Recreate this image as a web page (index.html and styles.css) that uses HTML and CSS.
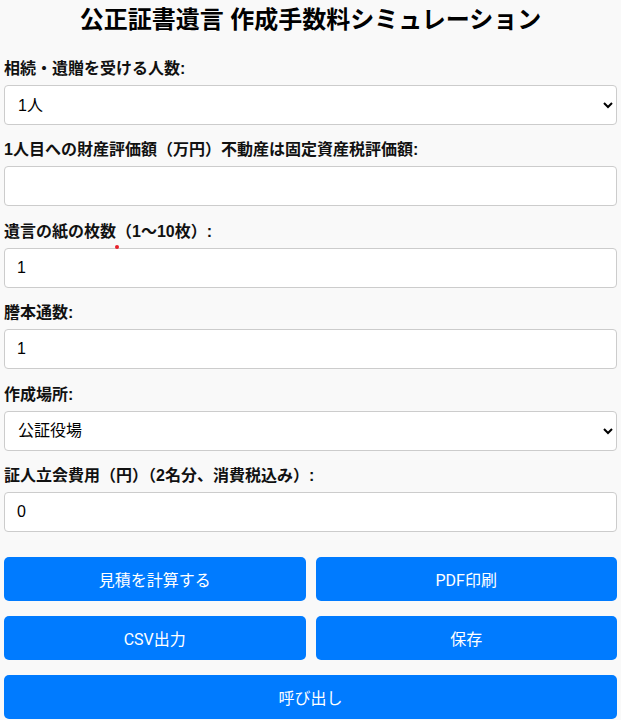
FILE: index.html
```html
<!DOCTYPE html>
<html lang="ja">
<head>
<meta charset="utf-8">
<title>公正証書遺言 作成手数料シミュレーション</title>
<link rel="stylesheet" href="styles.css">
</head>
<body>
<div class="page">
  <h1 class="title">公正証書遺言 作成手数料シミュレーション</h1>

  <div class="field">
    <label class="label" for="heirs">相続・遺贈を受ける人数:</label>
    <select id="heirs" class="control">
      <option>1人</option>
    </select>
  </div>

  <div class="field">
    <label class="label" for="value1">1人目への財産評価額（万円）不動産は固定資産税評価額:</label>
    <input id="value1" class="control" type="text" value="">
  </div>

  <div class="field">
    <label class="label marked" for="pages">遺言の紙の枚数（1〜10枚）:<span class="dot"></span></label>
    <input id="pages" class="control" type="text" value="1">
  </div>

  <div class="field">
    <label class="label" for="copies">謄本通数:</label>
    <input id="copies" class="control" type="text" value="1">
  </div>

  <div class="field">
    <label class="label" for="place">作成場所:</label>
    <select id="place" class="control">
      <option>公証役場</option>
    </select>
  </div>

  <div class="field">
    <label class="label" for="witness">証人立会費用（円）（2名分、消費税込み）:</label>
    <input id="witness" class="control" type="text" value="0">
  </div>

  <div class="buttons">
    <button class="btn">見積を計算する</button>
    <button class="btn">PDF印刷</button>
    <button class="btn">CSV出力</button>
    <button class="btn">保存</button>
    <button class="btn wide">呼び出し</button>
  </div>
</div>
</body>
</html>
```
FILE: styles.css
```css
html, body {
  margin: 0;
  padding: 0;
  background: #f9f9f9;
}

body {
  font-family: "Liberation Sans", "Noto Sans CJK JP", sans-serif;
  color: #000;
}

.page {
  padding: 4px 4px 0 4px;
}

.title {
  margin: 0 0 23px 0;
  font-size: 24px;
  line-height: 32px;
  font-weight: bold;
  text-align: center;
  font-family: "Liberation Sans", "Noto Sans CJK JP", sans-serif;
}

.field {
  margin-bottom: 15.4px;
}

.label {
  display: block;
  font-size: 16px;
  line-height: 20px;
  font-weight: bold;
  margin-bottom: 6px;
  color: #111;
}

.marked {
  position: relative;
}

.dot {
  position: absolute;
  left: 111px;
  top: 23px;
  width: 4px;
  height: 4px;
  border-radius: 50%;
  background: #e8202a;
}

.control {
  display: block;
  box-sizing: border-box;
  width: 100%;
  height: 40px;
  margin: 0;
  padding: 0 12px;
  border: 1px solid #ccc;
  border-radius: 4px;
  background-color: #fff;
  font-family: "Liberation Sans", "Noto Sans CJK JP", sans-serif;
  font-size: 16px;
  color: #000;
}

select.control {
  padding-left: 9px;
}

.buttons {
  display: grid;
  grid-template-columns: 1fr 1fr;
  column-gap: 10px;
  row-gap: 15px;
  margin-top: 25px;
}

.btn {
  height: 44px;
  border: none;
  border-radius: 5px;
  background: #007bff;
  color: #fff;
  font-family: "Roboto", "Noto Sans CJK JP", sans-serif;
  font-size: 16px;
  cursor: pointer;
}

.wide {
  grid-column: 1 / span 2;
}
```
